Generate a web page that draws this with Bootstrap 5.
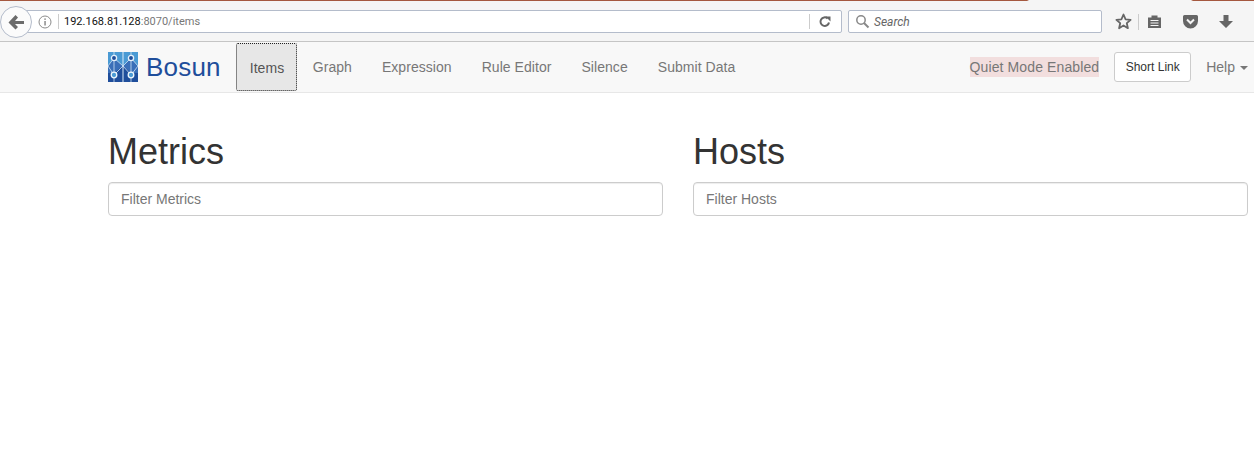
<!DOCTYPE html>
<html lang="en">
<head>
<meta charset="utf-8">
<title>Bosun</title>
<link rel="stylesheet" href="https://cdn.jsdelivr.net/npm/bootstrap@5.3.0/dist/css/bootstrap.min.css">
<style>
html,body{height:100%;overflow:hidden}
body{font-family:"Liberation Sans",Arial,sans-serif;font-size:14px;color:#333;background:#fff}
.strip{height:1px;background:linear-gradient(to right,#a5583f 0,#a5583f 1027px,#f5f5f5 1029px,#f5f5f5 1191px,#a5583f 1193px)}
.tbar{height:41px;background:#f5f5f5;border-bottom:1px solid #c5c5c5;padding-top:9px;align-items:flex-start}
.backb{width:32px;height:32px;margin:-4px -10px 0 0;border-radius:50%;background:#fbfbfb;border:1px solid #b4bccb;flex:none;position:relative;z-index:2}
.urlb{width:820px;height:23px;background:#fff;border:1px solid #b4bccb;border-radius:0 2px 2px 0;flex:none;padding-left:15px;font:11px Roboto,sans-serif;color:#777}
.urlb b{font-weight:400;color:#111}
.sep{width:1px;height:15px;background:#ccc;flex:none}
.sepa{margin-left:6px}
.urltext{margin-left:5px}
.reload{margin:0 9px 0 8px}
.srch{width:254px;height:23px;margin-left:6px;background:#fff;border:1px solid #b4bccb;border-radius:2px;flex:none;padding-left:6px;font:italic 12px Roboto,sans-serif;color:#666}
.tools{margin-left:13px;color:#666;height:23px}
.topnav{height:51px;background:#f8f8f8;border-bottom:1px solid #e7e7e7;padding:0 6px 0 108px}
.brandt{font-size:26px;line-height:50px;color:#1f4e9b;margin-left:8px;margin-right:15px;text-decoration:none;letter-spacing:.2px}
.brandt:hover{color:#1f4e9b}
.plink{color:#777;text-decoration:none;display:block;letter-spacing:.05px}
.plink.cur{color:#555;background:#e7e7e7;border:1px dotted #222;padding:15px 13px;border-radius:2px;height:48px;width:61px;line-height:18px;margin:1px 1px 0 0;white-space:nowrap}
.plink:not(.cur){padding:15px 15px;height:50px;line-height:20px}
.quiet{background:#f2dede;color:#777;line-height:20px;margin-right:15px;letter-spacing:.11px}
.shortb{font-size:12px;line-height:18px;padding:5px 10px;background:#fff;border:1px solid #ccc;border-radius:3px;color:#333;height:30px;width:77px;white-space:nowrap}
.helpl{color:#777;margin-left:15px}
.drop{display:inline-block;border-top:4px solid #777;border-left:4px solid transparent;border-right:4px solid transparent;margin-left:5px;vertical-align:middle}
.rightset{height:50px}
.pagebody{padding:0 6px 0 108px}
.pagebody .row{--bs-gutter-x:30px}
.ptitle{font-size:36px;font-weight:500;line-height:39.6px;color:#333;margin:39px 0 10px}
.filterc{height:34px;font-size:14px;padding:6px 12px;border:1px solid #ccc;border-radius:4px;box-shadow:inset 0 1px 1px rgba(0,0,0,.075);color:#555}
.filterc::placeholder{color:#777;opacity:1}
.gapl{margin-left:20px}
.gapr{margin-left:19px}
.toolsep{margin:0 8px 0 6px;height:16px}
.logo{margin-top:10px;flex:none}
</style>
</head>
<body>
<div class="strip"></div>
<div class="tbar d-flex">
  <div class="backb d-flex align-items-center justify-content-center">
    <svg width="18" height="17" viewBox="0 0 18 17"><path d="M8.500 1 1.500 8.500l7 7 2.500-2.500-3-3H17V7H8l3-3.500z" fill="#6b6b6b"/></svg>
  </div>
  <div class="urlb d-flex align-items-center">
    <svg width="14" height="14" viewBox="0 0 14 14" class="flex-none"><circle cx="7" cy="7" r="6" fill="none" stroke="#8c8c8c"/><rect x="6.300" y="6" width="1.500" height="4.500" fill="#8c8c8c"/><rect x="6.300" y="3.400" width="1.500" height="1.500" fill="#8c8c8c"/></svg>
    <span class="sep sepa"></span>
    <span class="urltext"><b>192.168.81.128</b>:8070/items</span>
    <span class="sep ms-auto"></span>
    <svg width="14" height="14" viewBox="0 0 14 14" class="reload"><path d="M11 7.500A4.300 4.300 0 1 1 9.600 3.400" fill="none" stroke="#666" stroke-width="2"/><path d="M8 1h5v5z" fill="#666" transform="translate(-.5 .5)"/></svg>
  </div>
  <div class="srch d-flex align-items-center">
    <svg width="15" height="15" viewBox="0 0 15 15" class="me-1"><circle cx="6" cy="6" r="4.200" fill="none" stroke="#888" stroke-width="1.500"/><path d="m9 9 4.500 4.500" stroke="#888" stroke-width="2"/></svg>
    <span>Search</span>
  </div>
  <div class="tools d-flex align-items-center">
    <svg width="17" height="17" viewBox="0 0 17 17"><path d="M8.500 1.500 10.600 6.300l5 .5-3.800 3.400 1.100 5-4.400-2.700-4.400 2.700 1.100-5L1.400 6.800l5-.5z" fill="none" stroke="#666" stroke-width="1.800" stroke-linejoin="round"/></svg>
    <span class="sep toolsep"></span>
    <svg width="15" height="15" viewBox="0 0 15 15"><path d="M1 3.500h3.500V1.500h6v2H14V14H1z" fill="#666"/><path d="M3.500 6.500h8M3.500 9h8M3.500 11.500h8" stroke="#f5f5f5" stroke-width="1"/></svg>
    <svg width="17" height="15" viewBox="0 0 17 15" class="gapl"><path d="M2.500 1h12A1.500 1.500 0 0 1 16 2.500V7a7.500 7.500 0 0 1-15 0V2.500A1.500 1.500 0 0 1 2.500 1z" fill="#666"/><path d="m5 5.500 3.500 3.500L12 5.500" fill="none" stroke="#f5f5f5" stroke-width="2"/></svg>
    <svg width="16" height="15" viewBox="0 0 16 15" class="gapr"><path d="M5.500 1h5v6H15l-7 7-7-7h4.500z" fill="#666"/></svg>
  </div>
</div>
<nav class="topnav d-flex align-items-start">
  <svg width="30" height="30" viewBox="0 0 30 30" class="logo">
    <rect width="30" height="30" fill="#4a9ad4"/>
    <path d="M0 14 6 6l9 8 8-8 7 8v16H0z" fill="#3a6fb8"/>
    <path d="M0 21h6l9-7 8 7h7v9H0z" fill="#1f4e9b"/>
    <path d="M0 14 6 6l9 8 8-8 7 8M0 14l6 9 9-9 8 9 7-9M6 0v30M23 0v30" fill="none" stroke="#cfe3f4" stroke-width=".8"/>
    <path d="M15 0v30" stroke="#dcebf7" stroke-width="1"/>
    <circle cx="6" cy="6" r="2.600" fill="#1f4e9b" stroke="#e6f1fa" stroke-width="1.300"/>
    <circle cx="23" cy="6" r="2.600" fill="#1f4e9b" stroke="#e6f1fa" stroke-width="1.300"/>
    <circle cx="6" cy="23" r="2.800" fill="#4a9ad4" stroke="#eef6fc" stroke-width="1.300"/>
    <circle cx="23" cy="23" r="2.800" fill="#4a9ad4" stroke="#eef6fc" stroke-width="1.300"/>
  </svg>
  <a class="brandt" href="#">Bosun</a>
  <a class="plink cur" href="#">Items</a>
  <a class="plink" href="#">Graph</a>
  <a class="plink" href="#">Expression</a>
  <a class="plink" href="#">Rule Editor</a>
  <a class="plink" href="#">Silence</a>
  <a class="plink" href="#">Submit Data</a>
  <div class="ms-auto d-flex align-items-center rightset">
    <span class="quiet">Quiet Mode Enabled</span>
    <button class="shortb" type="button">Short Link</button>
    <a class="helpl text-decoration-none" href="#">Help<span class="drop"></span></a>
  </div>
</nav>
<main class="pagebody">
  <div class="row">
    <div class="col-6">
      <h1 class="ptitle">Metrics</h1>
      <input class="form-control filterc" type="text" placeholder="Filter Metrics">
    </div>
    <div class="col-6">
      <h1 class="ptitle">Hosts</h1>
      <input class="form-control filterc" type="text" placeholder="Filter Hosts">
    </div>
  </div>
</main>
<script src="https://cdn.jsdelivr.net/npm/bootstrap@5.3.0/dist/js/bootstrap.bundle.min.js"></script>
</body>
</html>
